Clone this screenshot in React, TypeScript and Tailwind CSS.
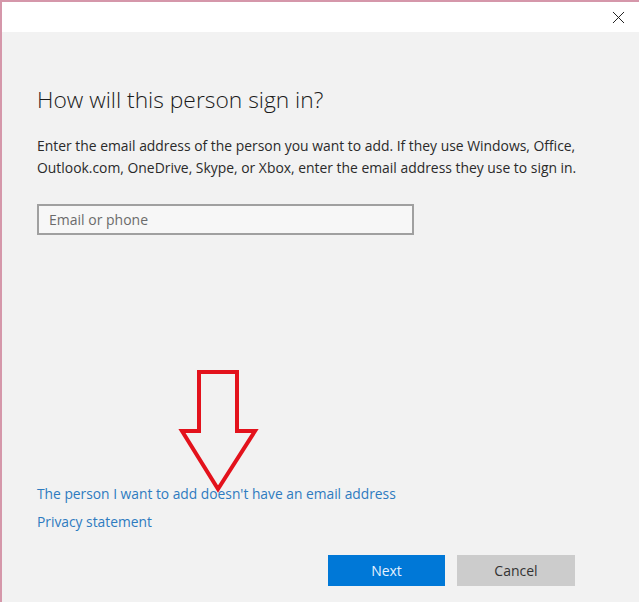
import { X } from "lucide-react";

export default function App() {
  return (
    <div
      className="relative h-[602px] w-[639px] overflow-hidden border-l-2 border-t-2 border-[#d597aa] bg-[#f2f2f2]"
      style={{ fontFamily: '"Open Sans", "Noto Sans", sans-serif' }}
    >
      <div className="flex h-[30px] items-center justify-end bg-white pr-[10px]">
        <X className="h-[21px] w-[21px] text-[#1a1a1a]" strokeWidth={1.1} />
      </div>

      <div className="flex h-[570px] flex-col pl-[35px]">
        <h1 className="mt-[53px] text-[22.8px] font-light leading-[30px] text-[#1b1b1b]">How will this person sign in?</h1>
        <p className="mt-[20px] w-[560px] text-[13.9px] leading-[22px] text-[#2a2a2a]">
          Enter the email address of the person you want to add. If they use Windows, Office, Outlook.com, OneDrive,
          Skype, or Xbox, enter the email address they use to sign in.
        </p>
        <input
          className="mt-[25px] h-[31px] w-[377px] border-2 border-[#a0a0a0] bg-[#f7f7f7] px-[10px] text-[14px] text-[#333] outline-none placeholder:text-[#6b6b6b]"
          placeholder="Email or phone"
        />

        <div className="mt-auto flex flex-col gap-[6px] pb-[16px]">
          <a className="text-[13.8px] leading-[22px] text-[#2e7bc0]">The person I want to add doesn't have an email address</a>
          <a className="text-[13.8px] leading-[22px] text-[#2e7bc0]">Privacy statement</a>
          <div className="mt-[16px] flex gap-[12px] pl-[291px]">
            <button className="h-[31px] w-[117px] bg-[#0078d7] text-[14px] text-[#e6f2ff]">Next</button>
            <button className="h-[31px] w-[118px] bg-[#cccccc] text-[14px] text-[#333]">Cancel</button>
          </div>
        </div>
      </div>

      <svg className="absolute left-[176px] top-[367px]" width="82" height="124" viewBox="0 0 82 124">
        <path
          d="M21 3 H59 V62 H77 L40 120 L4 62 H21 Z"
          fill="none"
          stroke="#e3121c"
          strokeWidth="4"
          strokeLinejoin="miter"
        />
      </svg>
    </div>
  );
}
